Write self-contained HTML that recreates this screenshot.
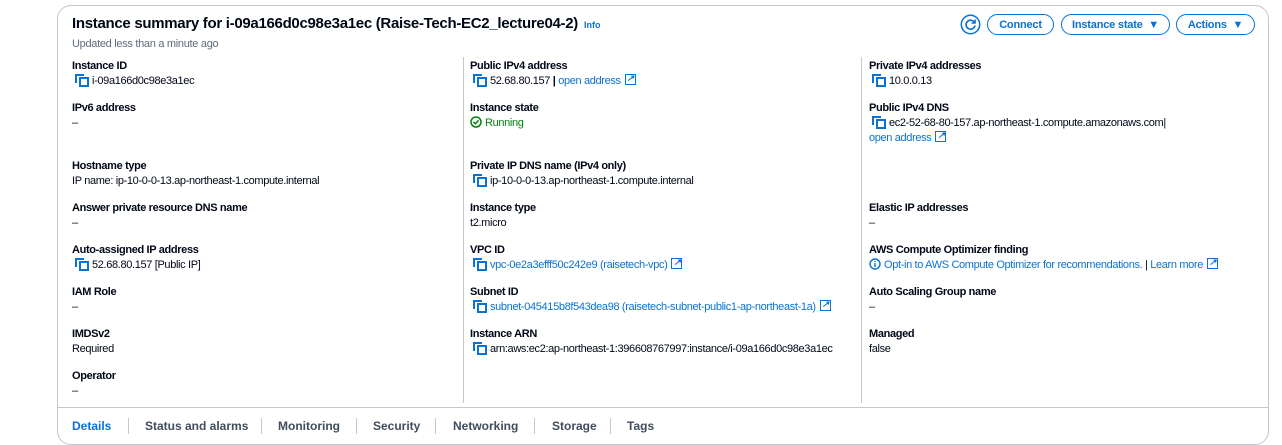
<!DOCTYPE html>
<html><head><style>
body{margin:0;width:1282px;height:424px;overflow:hidden;background:#fff;font-family:"Liberation Sans",sans-serif;color:#000716;position:relative}
.card{position:absolute;left:57px;top:5px;width:1212px;height:440px;border:1px solid #c6c6cd;border-radius:14px;box-sizing:border-box;}
.title{position:absolute;left:72px;top:15px;font-size:15px;font-weight:bold;letter-spacing:-0.3px;white-space:nowrap}
.title a{font-size:9px;color:#0972d3;font-weight:bold;margin-left:6px;letter-spacing:0}
.upd{position:absolute;left:72px;top:38px;font-size:11px;color:#5f6b7a;letter-spacing:-0.3px}
.it{position:absolute;font-size:11px;letter-spacing:-0.35px;white-space:nowrap;line-height:15px}
.it b{display:block}
.v{display:block}
.l{color:#0972d3}
.cp{display:inline-block;width:13px;height:12px;position:relative;vertical-align:-2px;margin-right:4px;margin-left:3px}
.cp:before{content:"";position:absolute;left:0;top:0;width:7px;height:7px;border-top:2px solid #0972d3;border-left:2px solid #0972d3}
.cp:after{content:"";position:absolute;left:4px;top:3px;width:6px;height:6px;border:2px solid #0972d3}
.ex{display:inline-block;width:9px;height:9px;border:1.5px solid #0972d3;margin-left:4px;vertical-align:-1px;position:relative}
.ex:after{content:"↗";position:absolute;left:1px;top:-4px;font-size:9px;color:#0972d3;font-weight:bold}
.div{position:absolute;width:1px;background:#c6c6cd;top:57px;height:346px}
.btn{position:absolute;top:14px;height:21px;border:1.5px solid #0972d3;border-radius:12px;box-sizing:border-box;color:#0972d3;font-weight:bold;font-size:11px;display:flex;align-items:center;justify-content:center;letter-spacing:-0.2px}
.tabs{position:absolute;left:57px;top:407px;width:1212px;border-top:1px solid #c6c6cd}
.tab{position:absolute;top:11px;font-size:12px;font-weight:bold;color:#414d5c}
.sep{position:absolute;top:10px;width:1px;height:16px;background:#c6c6cd}
</style></head><body>
<div class="card"></div>
<div class="title">Instance summary for i-09a166d0c98e3a1ec (Raise-Tech-EC2_lecture04-2)<a>Info</a></div>
<div class="upd">Updated less than a minute ago</div>
<svg style="position:absolute;left:960px;top:14px" width="21" height="21" viewBox="0 0 21 21"><circle cx="10.5" cy="10.5" r="9.2" fill="none" stroke="#0972d3" stroke-width="1.5"/><path d="M14.5 8.5a4.5 4.5 0 1 0 0.5 3" fill="none" stroke="#0972d3" stroke-width="1.6"/><path d="M15 5.5v3.5h-3.5" fill="none" stroke="#0972d3" stroke-width="1.6"/></svg>
<div class="btn" style="left:987px;width:67px">Connect</div>
<div class="btn" style="left:1061px;width:109px">Instance state&nbsp;&nbsp;▼</div>
<div class="btn" style="left:1176px;width:79px">Actions&nbsp;&nbsp;▼</div>
<div class="div" style="left:463px"></div>
<div class="div" style="left:861px"></div>

<div class="it" style="left:72px;top:59px"><b>Instance ID</b><span class="v"><i class="cp"></i>i-09a166d0c98e3a1ec</span></div>
<div class="it" style="left:72px;top:101px"><b>IPv6 address</b><span class="v">–</span></div>
<div class="it" style="left:72px;top:159px"><b>Hostname type</b><span class="v">IP name: ip-10-0-0-13.ap-northeast-1.compute.internal</span></div>
<div class="it" style="left:72px;top:201px"><b>Answer private resource DNS name</b><span class="v">–</span></div>
<div class="it" style="left:72px;top:243px"><b>Auto-assigned IP address</b><span class="v"><i class="cp"></i>52.68.80.157 [Public IP]</span></div>
<div class="it" style="left:72px;top:285px"><b>IAM Role</b><span class="v">–</span></div>
<div class="it" style="left:72px;top:327px"><b>IMDSv2</b><span class="v">Required</span></div>
<div class="it" style="left:72px;top:369px"><b>Operator</b><span class="v">–</span></div>

<div class="it" style="left:470px;top:59px"><b>Public IPv4 address</b><span class="v"><i class="cp"></i>52.68.80.157 <b style="display:inline">|</b> <span class="l">open address</span><i class="ex"></i></span></div>
<div class="it" style="left:470px;top:101px"><b>Instance state</b><span class="v" style="color:#037f0c"><svg width="12" height="12" viewBox="0 0 12 12" style="vertical-align:-2px;margin-right:3px"><circle cx="6" cy="6" r="5" fill="none" stroke="#037f0c" stroke-width="1.5"/><path d="M3.5 6l1.8 1.8L8.6 4.4" fill="none" stroke="#037f0c" stroke-width="1.5"/></svg>Running</span></div>
<div class="it" style="left:470px;top:159px"><b>Private IP DNS name (IPv4 only)</b><span class="v"><i class="cp"></i>ip-10-0-0-13.ap-northeast-1.compute.internal</span></div>
<div class="it" style="left:470px;top:201px"><b>Instance type</b><span class="v">t2.micro</span></div>
<div class="it" style="left:470px;top:243px"><b>VPC ID</b><span class="v"><i class="cp"></i><span class="l">vpc-0e2a3efff50c242e9 (raisetech-vpc)</span><i class="ex"></i></span></div>
<div class="it" style="left:470px;top:285px"><b>Subnet ID</b><span class="v"><i class="cp"></i><span class="l">subnet-045415b8f543dea98 (raisetech-subnet-public1-ap-northeast-1a)</span><i class="ex"></i></span></div>
<div class="it" style="left:470px;top:327px"><b>Instance ARN</b><span class="v"><i class="cp"></i>arn:aws:ec2:ap-northeast-1:396608767997:instance/i-09a166d0c98e3a1ec</span></div>

<div class="it" style="left:869px;top:59px"><b>Private IPv4 addresses</b><span class="v"><i class="cp"></i>10.0.0.13</span></div>
<div class="it" style="left:869px;top:101px"><b>Public IPv4 DNS</b><span class="v"><i class="cp"></i>ec2-52-68-80-157.ap-northeast-1.compute.amazonaws.com|</span><span class="v l">open address<i class="ex"></i></span></div>
<div class="it" style="left:869px;top:201px"><b>Elastic IP addresses</b><span class="v">–</span></div>
<div class="it" style="left:869px;top:243px"><b>AWS Compute Optimizer finding</b><span class="v"><span class="l"><svg width="12" height="12" viewBox="0 0 12 12" style="vertical-align:-2px;margin-right:3px"><circle cx="6" cy="6" r="5" fill="none" stroke="#0972d3" stroke-width="1.4"/><path d="M6 5v4M6 3v1" stroke="#0972d3" stroke-width="1.4"/></svg>Opt-in to AWS Compute Optimizer for recommendations.</span> | <span class="l">Learn more</span><i class="ex"></i></span></div>
<div class="it" style="left:869px;top:285px"><b>Auto Scaling Group name</b><span class="v">–</span></div>
<div class="it" style="left:869px;top:327px"><b>Managed</b><span class="v">false</span></div>

<div class="tabs">
<span class="tab" style="left:15px;color:#0972d3">Details</span><span class="sep" style="left:71px"></span>
<span class="tab" style="left:88px">Status and alarms</span><span class="sep" style="left:204px"></span>
<span class="tab" style="left:221px">Monitoring</span><span class="sep" style="left:299px"></span>
<span class="tab" style="left:316px">Security</span><span class="sep" style="left:378px"></span>
<span class="tab" style="left:396px">Networking</span><span class="sep" style="left:477px"></span>
<span class="tab" style="left:495px">Storage</span><span class="sep" style="left:553px"></span>
<span class="tab" style="left:570px">Tags</span>
</div>
</body></html>
